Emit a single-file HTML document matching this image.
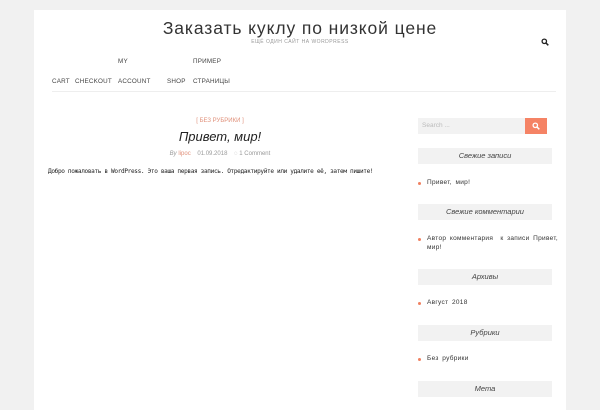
<!DOCTYPE html>
<html><head><meta charset="utf-8"><style>
body{margin:0;width:600px;height:400px;background:#f1f1f1;font-family:"Liberation Sans","DejaVu Sans",sans-serif;overflow:hidden;position:relative}
.c{position:absolute;left:34px;top:10px;width:532px;height:400px;background:#fff}
.a{position:absolute;white-space:nowrap}
.nav{font-size:6.3px;color:#444;letter-spacing:.2px}
.wh{position:absolute;left:418px;width:134px;height:16px;background:#f2f2f2;font-size:7.5px;font-style:italic;color:#444;text-align:center;line-height:16px}
.li{position:absolute;left:427px;font-size:6.5px;color:#333;letter-spacing:.3px;word-spacing:1.5px}
.li:before{content:"";position:absolute;left:-9px;top:2.5px;width:3px;height:3px;border-radius:50%;background:#f08060}
</style></head><body>
<div class="c"></div>
<div class="a" style="left:0;width:600px;text-align:center;top:18px;font-size:17.5px;color:#333;letter-spacing:.9px">Заказать куклу по низкой цене</div>
<div class="a" style="left:0;width:600px;text-align:center;top:39px;font-size:5px;color:#999;letter-spacing:.5px">ЕЩЁ ОДИН САЙТ НА WORDPRESS</div>
<svg class="a" style="left:541px;top:38px" width="8" height="8" viewBox="0 0 8 8"><circle cx="3.3" cy="3.3" r="2.2" fill="none" stroke="#222" stroke-width="1.3"/><line x1="5" y1="5" x2="7.3" y2="7.3" stroke="#222" stroke-width="1.5"/></svg>
<div class="a nav" style="left:118px;top:58px">MY</div>
<div class="a nav" style="left:193px;top:58px">ПРИМЕР</div>
<div class="a nav" style="left:52px;top:78px">CART</div>
<div class="a nav" style="left:75px;top:78px">CHECKOUT</div>
<div class="a nav" style="left:118px;top:78px">ACCOUNT</div>
<div class="a nav" style="left:167px;top:78px">SHOP</div>
<div class="a nav" style="left:193px;top:78px">СТРАНИЦЫ</div>
<div class="a" style="left:52px;top:91px;width:504px;height:1px;background:#eee"></div>
<div class="a" style="left:40px;width:360px;text-align:center;top:118px;font-size:6px;color:#e0907a">[ БЕЗ РУБРИКИ ]</div>
<div class="a" style="left:40px;width:360px;text-align:center;top:129px;font-size:13px;font-style:italic;color:#222">Привет, мир!</div>
<div class="a" style="left:40px;width:360px;text-align:center;top:151px;font-size:6px;color:#999"><i>By</i> <span style="color:#e0907a">lipoc</span> &nbsp;&nbsp; 01.09.2018 &nbsp;&nbsp; ◌ 1 Comment</div>
<div class="a" style="left:48px;top:168px;font-size:6.1px;color:#222;font-family:'DejaVu Sans Mono',monospace;letter-spacing:-.35px">Добро пожаловать в WordPress. Это ваша первая запись. Отредактируйте или удалите её, затем пишите!</div>
<div class="a" style="left:418px;top:118px;width:107px;height:16px;background:#f2f2f2;font-size:6.5px;color:#bbb;line-height:16px;text-indent:4px">Search ...</div>
<div class="a" style="left:525px;top:118px;width:22px;height:16px;background:#f58365"></div>
<svg class="a" style="left:532px;top:122px" width="8" height="8" viewBox="0 0 8 8"><circle cx="3.3" cy="3.3" r="2.2" fill="none" stroke="#fff" stroke-width="1.3"/><line x1="5" y1="5" x2="7.3" y2="7.3" stroke="#fff" stroke-width="1.5"/></svg>
<div class="wh" style="top:148px">Свежие записи</div>
<div class="li" style="top:179px">Привет, мир!</div>
<div class="wh" style="top:204px">Свежие комментарии</div>
<div class="li" style="top:235px">Автор комментария &nbsp;к записи Привет,</div>
<div class="a" style="left:427px;top:244px;font-size:6.5px;color:#333;letter-spacing:.3px">мир!</div>
<div class="wh" style="top:269px">Архивы</div>
<div class="li" style="top:299px">Август 2018</div>
<div class="wh" style="top:325px">Рубрики</div>
<div class="li" style="top:355px">Без рубрики</div>
<div class="wh" style="top:381px">Мета</div>
</body></html>
